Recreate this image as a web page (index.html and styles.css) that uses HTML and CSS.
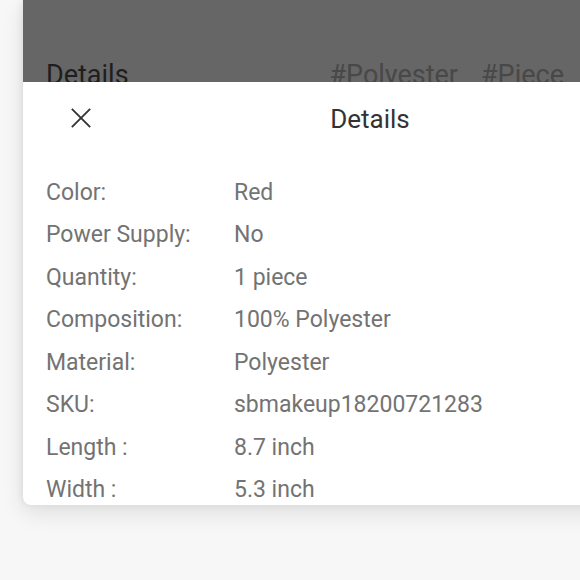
FILE: index.html
```html
<!DOCTYPE html>
<html>
<head>
<meta charset="utf-8">
<link rel="stylesheet" href="styles.css">
</head>
<body>
<div class="sheet">
  <div class="under">
    <span class="under-title">Details</span>
    <span class="tags"><span>#Polyester</span><span>#Piece</span></span>
  </div>
  <div class="panel">
    <div class="head">
      <svg class="close" width="24" height="24" viewBox="0 0 24 24"><path d="M2 2 L22 22 M22 2 L2 22" stroke="#333" stroke-width="2" fill="none"/></svg>
      <div class="title">Details</div>
    </div>
    <div class="rows">
      <div class="row"><span class="k">Color:</span><span class="v">Red</span></div>
      <div class="row"><span class="k">Power Supply:</span><span class="v">No</span></div>
      <div class="row"><span class="k">Quantity:</span><span class="v">1 piece</span></div>
      <div class="row"><span class="k">Composition:</span><span class="v">100% Polyester</span></div>
      <div class="row"><span class="k">Material:</span><span class="v">Polyester</span></div>
      <div class="row"><span class="k">SKU:</span><span class="v">sbmakeup18200721283</span></div>
      <div class="row"><span class="k">Length :</span><span class="v">8.7 inch</span></div>
      <div class="row"><span class="k">Width :</span><span class="v">5.3 inch</span></div>
    </div>
  </div>
</div>
</body>
</html>
```
FILE: styles.css
```css
html, body { margin: 0; padding: 0; }
body {
  background: #f7f7f7;
  font-family: Roboto, "Liberation Sans", sans-serif;
  width: 580px;
  height: 580px;
  overflow: hidden;
}
.sheet {
  margin-left: 23px;
  width: 694px;
  height: 505px;
  background: #fff;
  border-bottom-left-radius: 8px;
  overflow: hidden;
  box-shadow: 0 8px 22px rgba(0,0,0,0.10), -2px 0 6px rgba(0,0,0,0.06);
  display: flex;
  flex-direction: column;
}
.under {
  height: 82px;
  flex: none;
  background: #666;
  display: flex;
  align-items: flex-start;
  overflow: hidden;
  box-sizing: border-box;
  padding-left: 23px;
  padding-top: 59px;
  font-size: 27px;
  line-height: 32px;
}
.under-title {
  color: #1e1e1e;
}
.tags {
  margin-left: auto;
  margin-right: 153px;
  display: flex;
  gap: 23px;
  color: #484848;
}
.panel { flex: 1; }
.head {
  height: 74px;
  display: flex;
  align-items: center;
  justify-content: center;
  position: relative;
}
.close {
  position: absolute;
  left: 47px;
  top: 25px;
  width: 22px;
  height: 22px;
}
.title {
  font-size: 26px;
  color: #333;
}
.rows {
  padding-top: 15px;
  padding-left: 23px;
}
.row {
  display: flex;
  height: 42.5px;
  align-items: center;
  font-size: 23px;
  color: #737373;
}
.k { width: 188px; flex: none; }
```
